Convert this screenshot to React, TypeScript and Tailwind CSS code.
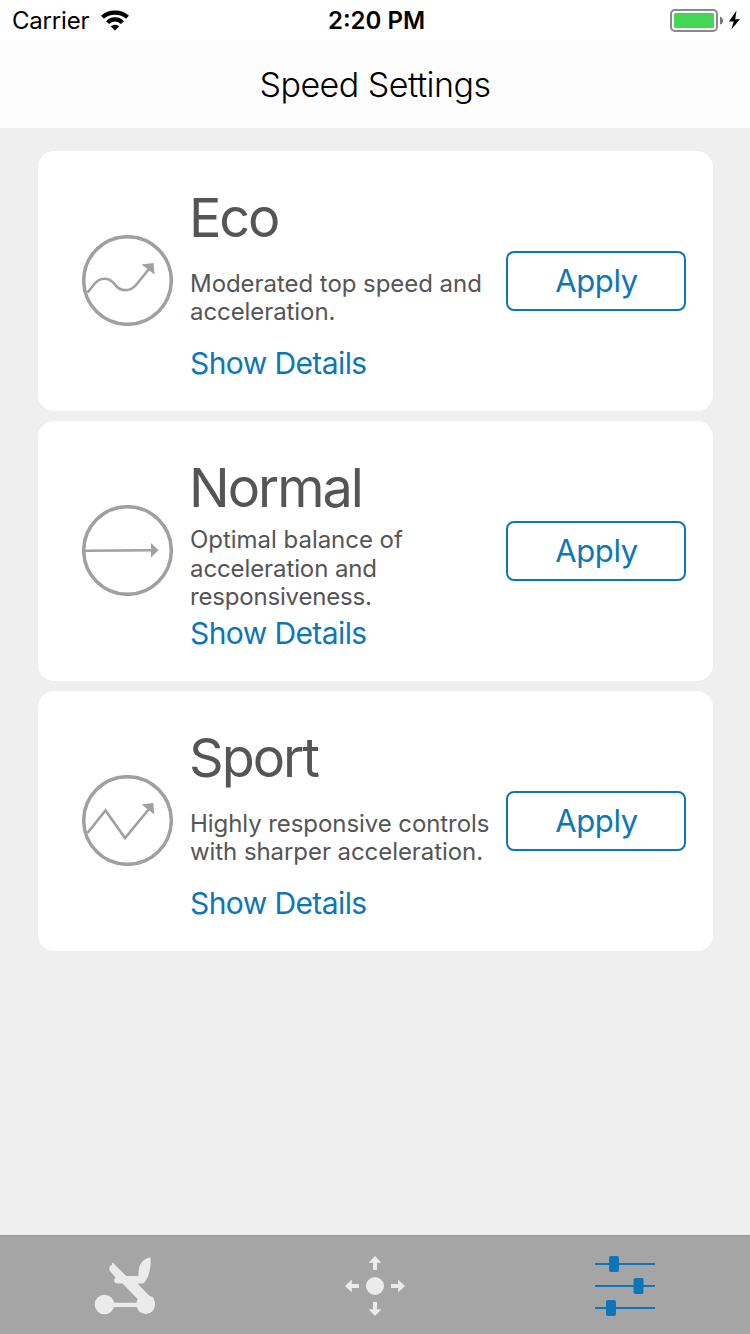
import type { ReactNode } from "react";

interface SpeedMode {
  name: string;
  nameClass: string;
  linesClass: string;
  lines: { text: string; className: string }[];
  icon: ReactNode;
}

const modes: SpeedMode[] = [
  {
    name: "Eco",
    nameClass: "tracking-[-2.2px]",
    linesClass: "leading-[28px] pb-0.5",
    lines: [
      { text: "Moderated top speed and", className: "tracking-[-0.05px]" },
      { text: "acceleration.", className: "tracking-[-0.08px]" },
    ],
    icon: (
      <>
        <path d="M5.5 57.5 L12 49.5 C18 42 27 42 32.5 49 C38 57 48 57 54 50 L67 34" />
        <path d="M59.5 29.5 L71.5 28 L72.5 39.5 Z" fill="#a0a0a0" stroke="none" />
      </>
    ),
  },
  {
    name: "Normal",
    nameClass: "tracking-[-2px]",
    linesClass: "leading-[28.5px] pt-px",
    lines: [
      { text: "Optimal balance of", className: "tracking-[-0.03px]" },
      { text: "acceleration and", className: "tracking-[-0.1px]" },
      { text: "responsiveness.", className: "tracking-[-0.18px]" },
    ],
    icon: (
      <>
        <path d="M3 45.8 L70 45.3" />
        <path d="M69 38 L76.5 45.3 L69 52.5 Z" fill="#a0a0a0" stroke="none" />
      </>
    ),
  },
  {
    name: "Sport",
    nameClass: "tracking-[-2px]",
    linesClass: "leading-[28px] pb-0.5",
    lines: [
      { text: "Highly responsive controls", className: "tracking-[-0.07px]" },
      { text: "with sharper acceleration.", className: "tracking-[-0.07px]" },
    ],
    icon: (
      <>
        <path d="M5.5 58 L23.5 35.5 L43 63 L67 34" />
        <path d="M59.5 29.5 L71.3 28 L72.3 39.5 Z" fill="#a0a0a0" stroke="none" />
      </>
    ),
  },
];

function StatusBar() {
  return (
    <div className="grid h-10 grid-cols-3 items-center bg-white text-2xl leading-[38px] text-black">
      <div className="flex h-10 items-center gap-3 pl-3">
        <span className="pt-0.5 tracking-[-0.2px]">Carrier</span>
        <svg width="28" height="21" viewBox="0 0 28 21" fill="none" stroke="#000" strokeWidth="4.2">
          <path d="M1.5 7.2 C8 1 20 1 26.5 7.2" />
          <path d="M6.6 12.6 C10.5 8.2 17.5 8.2 21.4 12.6" />
          <path d="M14 20.6 L9.8 16.4 C12 14.2 16 14.2 18.2 16.4 Z" fill="#000" stroke="none" />
        </svg>
      </div>
      <span className="pt-0.5 pl-[3px] text-center font-semibold">2:20 PM</span>
      <div className="flex h-10 items-center justify-end pr-2">
        <svg width="72" height="24" viewBox="0 0 72 24">
          <rect x="1" y="2" width="46" height="21" rx="4" fill="#fff" stroke="#8a8a8d" strokeWidth="2" />
          <rect x="4" y="5" width="40" height="15" rx="1.5" fill="#46d655" />
          <path d="M50 8.5 Q53 9.5 53 12.5 Q53 15.5 50 16.5 Z" fill="#77777a" />
          <path d="M66.5 2.5 L59 13.5 H63.7 L61.3 21.5 L70 11.2 H65.2 Z" fill="#000" />
        </svg>
      </div>
    </div>
  );
}

function SpeedCard({ mode }: { mode: SpeedMode }) {
  return (
    <section className="flex h-[260px] items-center rounded-[16px] bg-white pr-[27px] pl-11">
      <svg className="mb-0.5 shrink-0" width="91" height="91" viewBox="0 0 91 91" fill="none" stroke="#a0a0a0" strokeWidth="2.6">
        <circle cx="45.5" cy="45.5" r="43.8" strokeWidth="3.5" />
        {mode.icon}
      </svg>
      <div className="ml-[17px] flex h-full w-[316px] shrink-0 flex-col pt-[34px] text-[#555]">
        <h2 className={`-ml-px text-[54px] leading-[66px] ${mode.nameClass}`}>{mode.name}</h2>
        <div className="mt-[5px] h-[85px] text-2xl">
          <div className={`flex h-full flex-col justify-center ${mode.linesClass}`}>
            {mode.lines.map((line) => (
              <p key={line.text} className={`whitespace-nowrap ${line.className}`}>
                {line.text}
              </p>
            ))}
          </div>
        </div>
        <button className="self-start text-[30px] leading-[44px] tracking-[-0.6px] whitespace-nowrap text-[#0e76b8]">
          Show Details
        </button>
      </div>
      <button className="h-[60px] w-[180px] shrink-0 rounded-lg border-2 border-[#0e76b8] pl-px text-[31px] leading-[56px] tracking-[-0.4px] text-[#0e76b8]">
        Apply
      </button>
    </section>
  );
}

function TabBar() {
  return (
    <nav className="grid h-[99px] grid-cols-3 items-center justify-items-center border-t border-[#969696] bg-[#a5a5a5]">
      {/* vehicle */}
      <svg width="100" height="98" viewBox="75 1236 100 98" fill="#ebebeb">
        <circle cx="104.5" cy="1304.5" r="9.8" />
        <circle cx="145.7" cy="1304.5" r="9.4" />
        <path d="M104 1302.8 H146 V1307 H104 Z" />
        <path d="M112 1263.2 L113.5 1262.8 L115 1265 L126.2 1276 H138.5 C138 1267 141 1259 150.5 1257.3 C151.5 1264 149.5 1279 143 1283.6 H137.5 L149.5 1296 C153 1296.5 154.5 1298 153.5 1301 L139 1302 L137.5 1299 L122.5 1283.6 H117.5 C113.5 1283 113.3 1280 115.5 1277.5 L110 1271 C108.5 1268 109.5 1266 112 1265 Z" />
      </svg>
      {/* joystick */}
      <svg className="mt-0.5" width="60" height="60" viewBox="0 0 60 60" fill="#ebebeb">
        <circle cx="30" cy="30" r="9" />
        <path d="M30 0 L36.5 6.8 H32 V14 H28 V6.8 H23.5 Z" />
        <path d="M30 60 L36.5 53.2 H32 V46 H28 V53.2 H23.5 Z" />
        <path d="M0 30 L6.8 23.5 V28 H14 V32 H6.8 V36.5 Z" />
        <path d="M60 30 L53.2 23.5 V28 H46 V32 H53.2 V36.5 Z" />
      </svg>
      {/* sliders, the current tab */}
      <svg className="mt-0.5" width="60" height="60" viewBox="0 0 60 60" fill="#0e76b8">
        <rect y="7" width="60" height="2" />
        <rect y="29" width="60" height="2" />
        <rect y="51" width="60" height="2" />
        <rect x="14" y="0" width="10" height="16" rx="2" />
        <rect x="38.5" y="22" width="10" height="16" rx="2" />
        <rect x="11" y="44" width="10" height="16" rx="2" />
      </svg>
    </nav>
  );
}

export default function App() {
  return (
    <div className="flex h-[1334px] w-[750px] flex-col bg-[#efefef] font-['Inter','Liberation_Sans',sans-serif]">
      <StatusBar />
      <header className="flex h-22 items-center justify-center bg-[#fdfdfd] pt-0.5">
        <h1 className="text-[34px] leading-[44px] font-light tracking-[-0.5px] text-black">Speed Settings</h1>
      </header>
      <main className="flex flex-1 flex-col gap-2.5 pt-[23px] pr-[37px] pl-[38px]">
        {modes.map((mode) => (
          <SpeedCard key={mode.name} mode={mode} />
        ))}
      </main>
      <TabBar />
    </div>
  );
}
